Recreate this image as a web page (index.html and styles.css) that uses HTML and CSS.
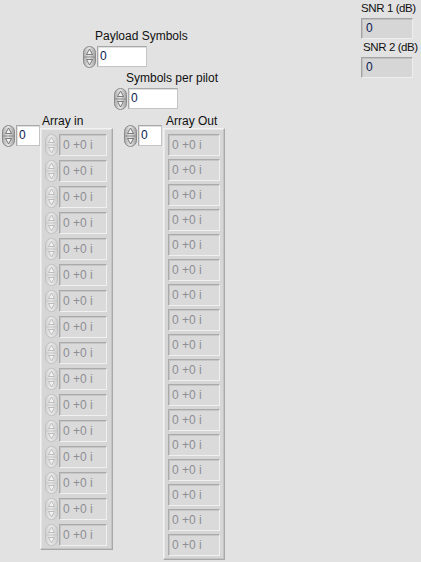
FILE: index.html
```html
<!DOCTYPE html>
<html>
<head>
<meta charset="utf-8">
<link rel="stylesheet" href="styles.css">
</head>
<body>
<svg width="0" height="0" class="defs">
  <defs>
    <linearGradient id="pill" x1="0" y1="0" x2="1" y2="0">
      <stop offset="0" stop-color="#a8a8a8"/>
      <stop offset="0.45" stop-color="#e8e8e8"/>
      <stop offset="1" stop-color="#a0a0a0"/>
    </linearGradient>
    <linearGradient id="pillDis" x1="0" y1="0" x2="1" y2="0">
      <stop offset="0" stop-color="#d0d0d0"/>
      <stop offset="0.45" stop-color="#ececec"/>
      <stop offset="1" stop-color="#cccccc"/>
    </linearGradient>
    <symbol id="spin" viewBox="0 0 13 22">
      <rect x="0.5" y="0.5" width="12" height="21" rx="6" ry="6" fill="url(#pill)" stroke="#8a8a8a"/>
      <line x1="1" y1="11" x2="12" y2="11" stroke="#8a8a8a"/>
      <path d="M6.5 3 L3.5 8.5 L9.5 8.5 Z" fill="#f0f0f0" stroke="#606060" stroke-width="0.8"/>
      <path d="M3.5 13.5 L9.5 13.5 L6.5 19 Z" fill="#f0f0f0" stroke="#606060" stroke-width="0.8"/>
    </symbol>
    <symbol id="spinDis" viewBox="0 0 13 22">
      <rect x="0.5" y="0.5" width="12" height="21" rx="6" ry="6" fill="url(#pillDis)" stroke="#c0c0c0"/>
      <line x1="1" y1="11" x2="12" y2="11" stroke="#c4c4c4"/>
      <path d="M6.5 3 L3.5 8.5 L9.5 8.5 Z" fill="#f2f2f2" stroke="#b0b0b0" stroke-width="0.8"/>
      <path d="M3.5 13.5 L9.5 13.5 L6.5 19 Z" fill="#f2f2f2" stroke="#b0b0b0" stroke-width="0.8"/>
    </symbol>
  </defs>
</svg>

<div class="panel">
  <div class="ctl payload">
    <div class="label">Payload Symbols</div>
    <div class="numrow">
      <svg class="spinner"><use href="#spin"/></svg>
      <div class="num wide">0</div>
    </div>
  </div>

  <div class="ctl pilot">
    <div class="label">Symbols per pilot</div>
    <div class="numrow">
      <svg class="spinner"><use href="#spin"/></svg>
      <div class="num wide">0</div>
    </div>
  </div>

  <div class="ctl snr1">
    <div class="label snr-label">SNR 1 (dB)</div>
    <div class="ind">0</div>
  </div>
  <div class="ctl snr2">
    <div class="label snr-label label-snr2">SNR 2 (dB)</div>
    <div class="ind">0</div>
  </div>

  <div class="ctl arr-in">
    <div class="label arr-label">Array in</div>
    <div class="arr-body">
      <div class="numrow index">
        <svg class="spinner"><use href="#spin"/></svg>
        <div class="num idx">0</div>
      </div>
      <div class="frame frame-in" id="framein"></div>
    </div>
  </div>

  <div class="ctl arr-out">
    <div class="label arr-label">Array Out</div>
    <div class="arr-body">
      <div class="numrow index">
        <svg class="spinner"><use href="#spin"/></svg>
        <div class="num idx">0</div>
      </div>
      <div class="frame frame-out" id="frameout"></div>
    </div>
  </div>
</div>
<script>
  var fi = document.getElementById('framein');
  for (var i = 0; i < 16; i++) {
    var r = document.createElement('div');
    r.className = 'cell-in';
    r.innerHTML = '<svg class="spinner"><use href="#spinDis"/></svg><div class="cx">0 +0 i</div>';
    fi.appendChild(r);
  }
  var fo = document.getElementById('frameout');
  for (var j = 0; j < 17; j++) {
    var c = document.createElement('div');
    c.className = 'cx cx-out';
    c.textContent = '0 +0 i';
    fo.appendChild(c);
  }
</script>
</body>
</html>
```
FILE: styles.css
```css
html, body {
  margin: 0;
  padding: 0;
}
body {
  width: 421px;
  height: 562px;
  overflow: hidden;
  background: #e2e2e2;
  font-family: "Liberation Sans", Arial, sans-serif;
  font-size: 12px;
  color: #000;
}
.defs {
  position: absolute;
  width: 0;
  height: 0;
}
.panel {
  position: relative;
  width: 421px;
  height: 562px;
}
.ctl {
  position: absolute;
  display: flex;
  flex-direction: column;
}
.label {
  height: 15px;
  line-height: 15px;
  white-space: nowrap;
  color: #111;
}
.numrow {
  display: flex;
  align-items: flex-start;
}
.spinner {
  width: 13px;
  height: 22px;
  flex: none;
}
.num {
  box-sizing: border-box;
  height: 21px;
  margin-left: 1px;
  background: #fff;
  border: 1px solid #c4c4c4;
  border-top-color: #a8a8a8;
  border-left-color: #a8a8a8;
  box-shadow: inset 1px 1px 0 #e0e0e0;
  padding-left: 2px;
  line-height: 19px;
  color: #0a1a50;
}
.num.wide { width: 50px; }
.num.idx { width: 24px; }

.payload { left: 83px; top: 29px; }
.payload .label { padding-left: 12px; margin-bottom: 2px; }
.pilot { left: 114px; top: 71px; }
.pilot .label { padding-left: 12px; margin-bottom: 2px; }

.snr1 { left: 361px; top: 1px; }
.snr2 { left: 361px; top: 40px; }
.snr-label {
  font-size: 11.5px;
  letter-spacing: -0.4px;
}
.label-snr2 { padding-left: 2px; }
.ind {
  box-sizing: border-box;
  width: 52px;
  height: 21px;
  margin-top: 2px;
  background: #d6d6d6;
  border: 1px solid #eeeeee;
  border-top-color: #a4a4a4;
  border-left-color: #a4a4a4;
  box-shadow: inset 1px 1px 0 #c0c0c0;
  padding-left: 4px;
  line-height: 19px;
  color: #0a1a50;
}

.arr-in { left: 2px; top: 114px; }
.arr-out { left: 124px; top: 114px; }
.arr-in .arr-label { padding-left: 40px; }
.arr-out .arr-label { padding-left: 42px; }
.arr-body {
  display: flex;
  align-items: flex-start;
}
.index { margin-top: -4px; }
.frame {
  box-sizing: border-box;
  margin-top: -1px;
  background: #d6d6d6;
  border: 1px solid #f2f2f2;
  border-right-color: #a8a8a8;
  border-bottom-color: #a8a8a8;
  box-shadow: inset -1px -1px 0 #c4c4c4, inset 1px 1px 0 #e6e6e6;
  display: flex;
  flex-direction: column;
}
.frame-in {
  margin-left: 0px;
  width: 73px;
  padding: 5px 5px 3px 4px;
  gap: 4px;
}
.frame-out {
  margin-left: 1px;
  width: 62px;
  padding: 5px 4px 3px 4px;
  gap: 3px;
}
.cell-in {
  display: flex;
  align-items: flex-start;
}
.cx {
  box-sizing: border-box;
  height: 22px;
  background: #dadada;
  border: 1px solid #f0f0f0;
  border-top-color: #aaaaaa;
  border-left-color: #aaaaaa;
  box-shadow: inset 1px 1px 0 #c6c6c6;
  padding-left: 3px;
  line-height: 20px;
  color: #8e8e94;
  white-space: nowrap;
}
.cell-in .cx {
  width: 48px;
  margin-left: 1px;
}
.cx-out {
  width: 52px;
}
```
